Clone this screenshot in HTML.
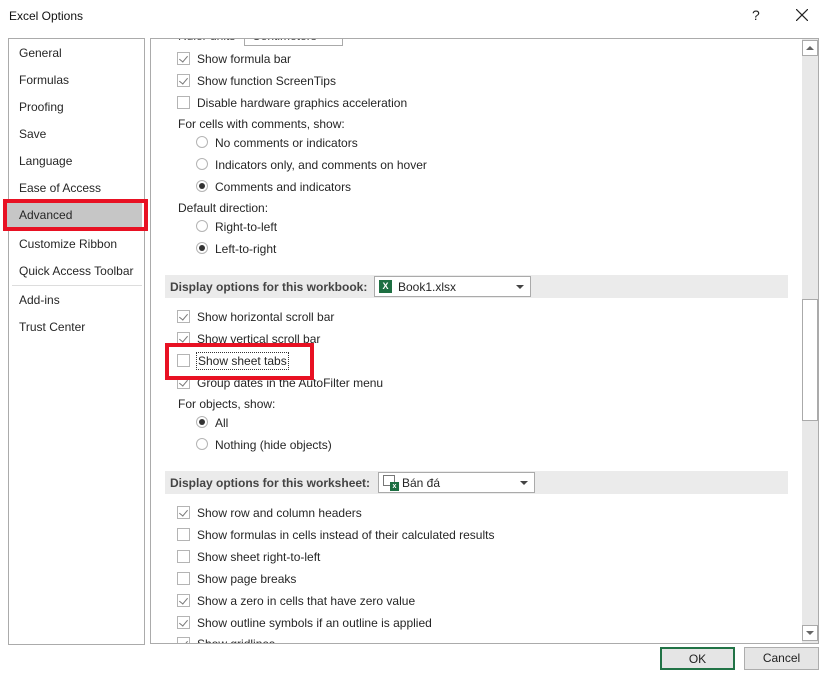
<!DOCTYPE html>
<html><head><meta charset="utf-8"><style>
*{margin:0;padding:0;box-sizing:border-box}
body{width:826px;height:678px;background:#fff;font-family:"Liberation Sans",sans-serif;font-size:12px;color:#262626;position:relative;overflow:hidden}
.a{position:absolute;white-space:nowrap}
.t{line-height:16px}
.cb{position:absolute;width:13px;height:13px;border:1px solid #b4b4b4;background:#fff}
.cb.c::after{content:"";position:absolute;left:3px;top:1px;width:4px;height:7px;border:solid #777;border-width:0 1px 1px 0;transform:rotate(40deg)}
.rd{position:absolute;width:12px;height:12px;border:1px solid #b4b4b4;border-radius:50%;background:#fff}
.rd.s::after{content:"";position:absolute;left:2px;top:2px;width:6px;height:6px;border-radius:50%;background:#333}
.hd{position:absolute;left:165px;width:623px;height:23px;background:#ebebeb}
.hd b{position:absolute;left:5px;top:5px;color:#444;font-size:12px}
.dd{position:absolute;height:21px;border:1px solid #aaa;background:#fff}
.dd .ar{position:absolute;right:6px;top:8px;border-left:4px solid transparent;border-right:4px solid transparent;border-top:4px solid #444}
.nv{position:absolute;left:19px}
.btn{position:absolute;top:647px;width:75px;height:23px;background:#e5e5e5;border:1px solid #adadad;text-align:center;line-height:21px;color:#222}
</style></head><body>
<div class="a t" style="left:9px;top:8px;font-size:12px;color:#111">Excel Options</div>
<div class="a" style="left:752px;top:7px;font-size:14px;color:#222">?</div>
<svg class="a" style="left:796px;top:9px" width="12" height="12"><path d="M0 0L12 12M12 0L0 12" stroke="#222" stroke-width="1.2"/></svg>

<div class="a" style="left:8px;top:38px;width:137px;height:607px;border:1px solid #ababab"></div>
<div class="a" style="left:6px;top:203px;width:136px;height:24px;background:#c6c6c6"></div>
<div class="nv t" style="top:45px">General</div>
<div class="nv t" style="top:72px">Formulas</div>
<div class="nv t" style="top:99px">Proofing</div>
<div class="nv t" style="top:126px">Save</div>
<div class="nv t" style="top:153px">Language</div>
<div class="nv t" style="top:180px">Ease of Access</div>
<div class="nv t" style="top:207px">Advanced</div>
<div class="nv t" style="top:236px">Customize Ribbon</div>
<div class="nv t" style="top:263px">Quick Access Toolbar</div>
<div class="a" style="left:12px;top:285px;width:130px;height:1px;background:#ddd"></div>
<div class="nv t" style="top:292px">Add-ins</div>
<div class="nv t" style="top:319px">Trust Center</div>
<div class="a" style="left:3px;top:199px;width:145px;height:32px;border:4px solid #e81123"></div>

<div class="a" style="left:150px;top:38px;width:669px;height:606px;border:1px solid #ababab"></div>
<div class="a" style="left:244px;top:38px;width:99px;height:8px;border:1px solid #aaa;border-top:none"></div>
<div class="a t" style="left:178px;top:28px;color:#444;clip-path:inset(11px 0 0 0)">Ruler units</div>
<div class="a t" style="left:252px;top:28px;color:#444;clip-path:inset(11px 0 0 0)">Centimeters</div>

<div class="cb c" style="left:177px;top:52px"></div><div class="a t" style="left:197px;top:51px">Show formula bar</div>
<div class="cb c" style="left:177px;top:74px"></div><div class="a t" style="left:197px;top:73px">Show function ScreenTips</div>
<div class="cb" style="left:177px;top:96px"></div><div class="a t" style="left:197px;top:95px">Disable hardware graphics acceleration</div>
<div class="a t" style="left:178px;top:116px">For cells with comments, show:</div>
<div class="rd" style="left:196px;top:136px"></div><div class="a t" style="left:215px;top:135px">No comments or indicators</div>
<div class="rd" style="left:196px;top:158px"></div><div class="a t" style="left:215px;top:157px">Indicators only, and comments on hover</div>
<div class="rd s" style="left:196px;top:180px"></div><div class="a t" style="left:215px;top:179px">Comments and indicators</div>
<div class="a t" style="left:178px;top:200px">Default direction:</div>
<div class="rd" style="left:196px;top:220px"></div><div class="a t" style="left:215px;top:219px">Right-to-left</div>
<div class="rd s" style="left:196px;top:242px"></div><div class="a t" style="left:215px;top:241px">Left-to-right</div>

<div class="hd" style="top:275px"><b>Display options for this workbook:</b></div>
<div class="dd" style="left:374px;top:276px;width:157px">
<div class="a" style="left:4px;top:3px;width:13px;height:13px;background:#1d6f42;color:#fff;font-size:9px;font-weight:bold;text-align:center;line-height:13px">X</div>
<div class="a t" style="left:23px;top:2px">Book1.xlsx</div><div class="ar"></div></div>

<div class="cb c" style="left:177px;top:310px"></div><div class="a t" style="left:197px;top:309px">Show horizontal scroll bar</div>
<div class="cb c" style="left:177px;top:332px"></div><div class="a t" style="left:197px;top:331px">Show vertical scroll bar</div>
<div class="cb" style="left:177px;top:354px"></div><div class="a t" style="left:196px;top:352px;border:1px dotted #333;padding:0 1px">Show sheet tabs</div>
<div class="cb c" style="left:177px;top:376px"></div><div class="a t" style="left:197px;top:375px">Group dates in the AutoFilter menu</div>
<div class="a t" style="left:178px;top:396px">For objects, show:</div>
<div class="rd s" style="left:196px;top:416px"></div><div class="a t" style="left:215px;top:415px">All</div>
<div class="rd" style="left:196px;top:438px"></div><div class="a t" style="left:215px;top:437px">Nothing (hide objects)</div>
<div class="a" style="left:165px;top:343px;width:149px;height:37px;border:4px solid #e81123"></div>

<div class="hd" style="top:471px"><b>Display options for this worksheet:</b></div>
<div class="dd" style="left:378px;top:472px;width:157px">
<div class="a" style="left:4px;top:2px;width:12px;height:11px;border:1px solid #777"></div>
<div class="a" style="left:11px;top:9px;width:9px;height:9px;background:#1d6f42;color:#fff;font-size:7px;font-weight:bold;text-align:center;line-height:9px">x</div>
<div class="a t" style="left:23px;top:2px">Bán đá</div><div class="ar"></div></div>

<div class="cb c" style="left:177px;top:506px"></div><div class="a t" style="left:197px;top:505px">Show row and column headers</div>
<div class="cb" style="left:177px;top:528px"></div><div class="a t" style="left:197px;top:527px">Show formulas in cells instead of their calculated results</div>
<div class="cb" style="left:177px;top:550px"></div><div class="a t" style="left:197px;top:549px">Show sheet right-to-left</div>
<div class="cb" style="left:177px;top:572px"></div><div class="a t" style="left:197px;top:571px">Show page breaks</div>
<div class="cb c" style="left:177px;top:594px"></div><div class="a t" style="left:197px;top:593px">Show a zero in cells that have zero value</div>
<div class="cb c" style="left:177px;top:616px"></div><div class="a t" style="left:197px;top:615px">Show outline symbols if an outline is applied</div>
<div class="a" style="left:151px;top:637px;width:650px;height:6px;overflow:hidden"><div class="cb c" style="left:26px;top:0"></div><div class="a t" style="left:46px;top:-1px">Show gridlines</div></div>
<div class="a" style="left:151px;top:643px;width:668px;height:1px;background:#ababab"></div>

<div class="a" style="left:802px;top:39px;width:16px;height:604px;background:#e8e8e8"></div>
<div class="a" style="left:802px;top:40px;width:16px;height:16px;background:#fff;border:1px solid #aaa"></div>
<div class="a" style="left:806px;top:46px;border-left:4px solid transparent;border-right:4px solid transparent;border-bottom:4px solid #666"></div>
<div class="a" style="left:802px;top:299px;width:16px;height:122px;background:#fff;border:1px solid #aaa"></div>
<div class="a" style="left:802px;top:625px;width:16px;height:16px;background:#fff;border:1px solid #aaa"></div>
<div class="a" style="left:806px;top:631px;border-left:4px solid transparent;border-right:4px solid transparent;border-top:4px solid #666"></div>

<div class="btn" style="left:660px;border:2px solid #217346">OK</div>
<div class="btn" style="left:744px">Cancel</div>
</body></html>
